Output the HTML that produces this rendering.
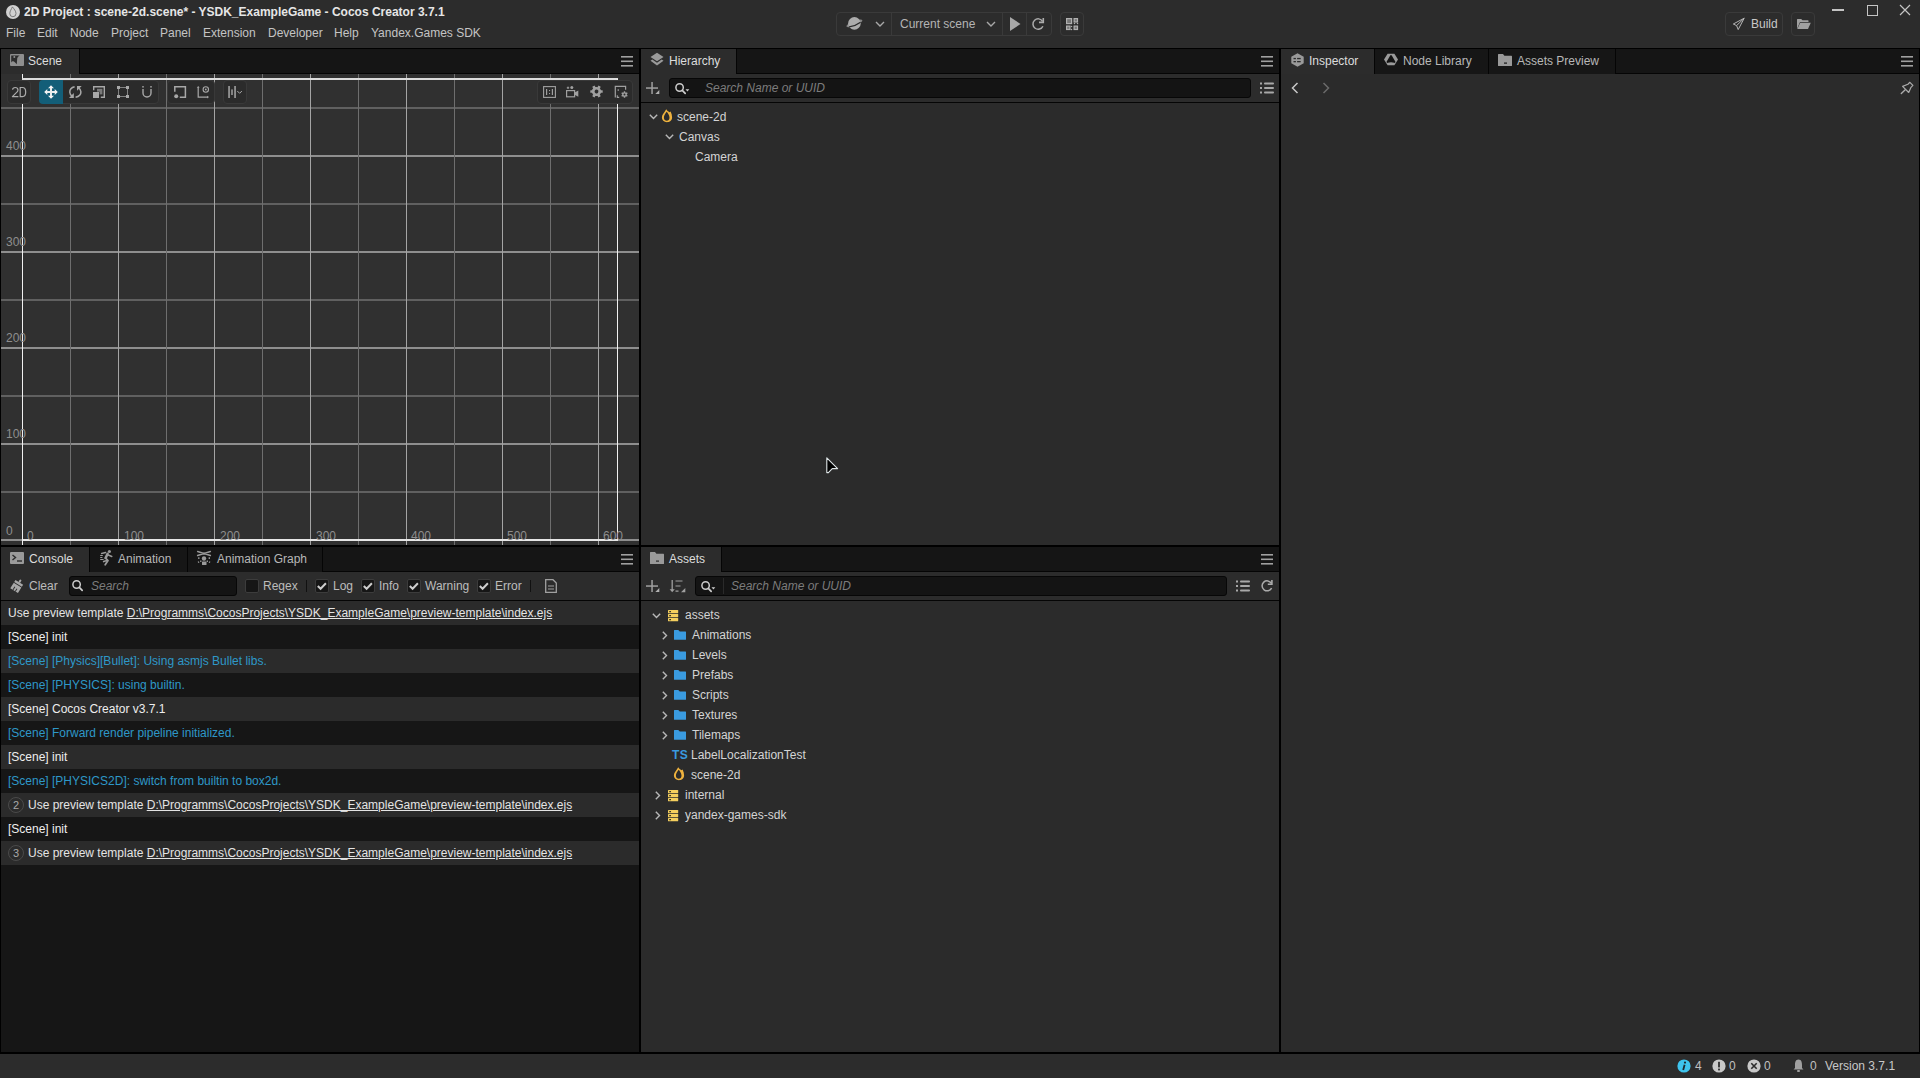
<!DOCTYPE html>
<html><head><meta charset="utf-8">
<style>
*{box-sizing:border-box;margin:0;padding:0}
html,body{width:1920px;height:1078px;overflow:hidden}
body{position:relative;background:#2c2c2c;font-family:"Liberation Sans",sans-serif;font-size:12px;color:#bdbdbd}
.a{position:absolute}
.t{position:absolute;white-space:pre;line-height:14px}
.blk{background:#000}
.tabbar{background:#141414}
.tab{position:absolute;top:0;height:24px;background:#2c2c2c;border-top:1px solid #383838}
.tab2{position:absolute;top:0;height:24px;background:#171717;border-right:1px solid #0b0b0b}
svg{position:absolute;overflow:visible}
</style></head><body>
<!-- TITLE BAR -->
<div class="a" style="left:0;top:0;width:1920px;height:48px;background:#2c2c2c"></div>
<svg style="left:6px;top:5px" width="14" height="14" viewBox="0 0 14 14"><circle cx="7" cy="7" r="7" fill="#d2d2d2"/><path d="M6.4 1.9 C8 4 10 6 10 8.6 A3.1 3.1 0 0 1 3.8 8.6 C3.8 6.2 5.3 4.4 6.4 1.9Z" fill="none" stroke="#707070" stroke-width="0.9"/></svg>
<div class="t" style="left:24px;top:5px;font-weight:bold;color:#e6e6e6">2D Project : scene-2d.scene* - YSDK_ExampleGame - Cocos Creator 3.7.1</div>
<div class="t" style="left:6px;top:26px;color:#c4c4c4">File</div>
<div class="t" style="left:37px;top:26px;color:#c4c4c4">Edit</div>
<div class="t" style="left:70px;top:26px;color:#c4c4c4">Node</div>
<div class="t" style="left:111px;top:26px;color:#c4c4c4">Project</div>
<div class="t" style="left:160px;top:26px;color:#c4c4c4">Panel</div>
<div class="t" style="left:203px;top:26px;color:#c4c4c4">Extension</div>
<div class="t" style="left:268px;top:26px;color:#c4c4c4">Developer</div>
<div class="t" style="left:334px;top:26px;color:#c4c4c4">Help</div>
<div class="t" style="left:371px;top:26px;color:#c4c4c4">Yandex.Games SDK</div>

<!-- HEADER TOOLBAR -->
<div class="a" style="left:836px;top:12px;width:216px;height:24px;border:1px solid #3a3a3a;border-radius:4px"></div>
<div class="a" style="left:891px;top:13px;width:1px;height:22px;background:#3a3a3a"></div>
<div class="a" style="left:1002px;top:13px;width:1px;height:22px;background:#3a3a3a"></div>
<div class="a" style="left:1026px;top:13px;width:1px;height:22px;background:#3a3a3a"></div>
<svg style="left:845px;top:15px" width="19" height="17" viewBox="0 0 19 17"><g transform="rotate(-22 9.4 8.4)"><ellipse cx="9.4" cy="8.4" rx="8.6" ry="2.4" fill="#858585"/></g><circle cx="9.4" cy="8.4" r="6.3" fill="#acacac"/><g transform="rotate(-22 9.4 8.4)"><path d="M3.2 9.6 Q9.4 11.2 15.6 9.6" fill="none" stroke="#2a2a2a" stroke-width="1.3"/></g></svg>
<svg style="left:875px;top:21px" width="10" height="7" viewBox="0 0 10 7"><path d="M1 1 L5 5 L9 1" fill="none" stroke="#a8a8a8" stroke-width="1.4"/></svg>
<div class="t" style="left:900px;top:17px;color:#b4b4b4">Current scene</div>
<svg style="left:986px;top:21px" width="10" height="7" viewBox="0 0 10 7"><path d="M1 1 L5 5 L9 1" fill="none" stroke="#a8a8a8" stroke-width="1.4"/></svg>
<svg style="left:1010px;top:17px" width="11" height="14" viewBox="0 0 11 14"><path d="M0 0 L10.5 7 L0 14Z" fill="#a8a8a8"/></svg>
<svg style="left:1032px;top:17px" width="13" height="14" viewBox="0 0 13 14"><path d="M10.6 4.3 A5.2 5.2 0 1 0 10.9 9.2" fill="none" stroke="#ababab" stroke-width="1.5"/><path d="M11.3 0.9 V5.4 H7" fill="none" stroke="#ababab" stroke-width="1.6"/></svg>
<div class="a" style="left:1060px;top:12px;width:24px;height:24px;border:1px solid #3a3a3a;border-radius:4px"></div>
<svg style="left:1066px;top:18px" width="12" height="12" viewBox="0 0 12 12"><rect x="0.6" y="0.6" width="5" height="5" fill="#777" stroke="#b0b0b0" stroke-width="1.2"/><rect x="8.1" y="0.6" width="3.4" height="3.4" fill="#777" stroke="#b0b0b0" stroke-width="1.2"/><rect x="0.6" y="8.1" width="3.4" height="3.4" fill="#777" stroke="#b0b0b0" stroke-width="1.2"/><rect x="8.1" y="8.1" width="3.4" height="3.4" fill="#777" stroke="#b0b0b0" stroke-width="1.2"/><circle cx="8.5" cy="5.5" r="0.75" fill="#b0b0b0"/><circle cx="11.5" cy="5.5" r="0.75" fill="#b0b0b0"/><circle cx="5.5" cy="8.5" r="0.75" fill="#b0b0b0"/><circle cx="5.5" cy="11.5" r="0.75" fill="#b0b0b0"/></svg>
<div class="a" style="left:1725px;top:12px;width:58px;height:24px;border:1px solid #3a3a3a;border-radius:4px"></div>
<svg style="left:1732px;top:17px" width="14" height="14" viewBox="0 0 14 14"><path d="M12.2 1.2 L1.3 7 L4.6 8.6 L6.2 12.6 Z M12.2 1.2 L4.6 8.6" fill="none" stroke="#b4b4b4" stroke-width="1" stroke-linejoin="round"/></svg>
<div class="t" style="left:1751px;top:17px;color:#c8c8c8">Build</div>
<div class="a" style="left:1791px;top:12px;width:24px;height:24px;border:1px solid #3a3a3a;border-radius:4px"></div>
<svg style="left:1797px;top:19px" width="14" height="10" viewBox="0 0 14 10"><path d="M0 0.5 Q0 0 0.5 0 H4.2 L5.5 1.3 H11 Q11.5 1.3 11.5 1.8 V3 H3 L0 10Z" fill="#a0a0a0"/><path d="M3.2 3.8 H13.8 L11 10 H0.3Z" fill="#a0a0a0"/></svg>
<div class="a" style="left:1832px;top:9px;width:12px;height:1.5px;background:#c4c4c4"></div>
<div class="a" style="left:1867px;top:5px;width:10.5px;height:10.5px;border:1.2px solid #c4c4c4"></div>
<svg style="left:1899px;top:4px" width="12" height="12" viewBox="0 0 12 12"><path d="M1 1 L11 11 M11 1 L1 11" stroke="#c4c4c4" stroke-width="1.2"/></svg>
<!-- FRAME (black) -->
<div class="a blk" style="left:0;top:48px;width:1920px;height:1006px"></div>

<!-- SCENE PANEL -->
<div class="a" style="left:1px;top:49px;width:638px;height:25px;background:#151515;border-bottom:1px solid #050505"></div>
<div class="a" style="left:1px;top:49px;width:79px;height:25px;background:#2c2c2c;border-right:1px solid #050505"></div>
<div class="a" style="left:1px;top:74px;width:638px;height:471px;background:#303030"></div>
<svg style="left:1px;top:74px" width="638" height="471"><rect x="0" y="33" width="638" height="2" fill="#606060"/><rect x="0" y="129" width="638" height="2" fill="#606060"/><rect x="0" y="225" width="638" height="2" fill="#606060"/><rect x="0" y="321" width="638" height="2" fill="#606060"/><rect x="0" y="417" width="638" height="2" fill="#606060"/><rect x="0" y="81" width="638" height="2" fill="#8e8e8e"/><rect x="0" y="177" width="638" height="2" fill="#8e8e8e"/><rect x="0" y="273" width="638" height="2" fill="#8e8e8e"/><rect x="0" y="369" width="638" height="2" fill="#8e8e8e"/><rect x="69" y="0" width="1" height="471" fill="#6e6e6e"/><rect x="165" y="0" width="1" height="471" fill="#6e6e6e"/><rect x="261" y="0" width="1" height="471" fill="#6e6e6e"/><rect x="357" y="0" width="1" height="471" fill="#6e6e6e"/><rect x="453" y="0" width="1" height="471" fill="#6e6e6e"/><rect x="549" y="0" width="1" height="471" fill="#6e6e6e"/><rect x="117" y="0" width="1" height="471" fill="#a4a4a4"/><rect x="213" y="0" width="1" height="471" fill="#a4a4a4"/><rect x="309" y="0" width="1" height="471" fill="#a4a4a4"/><rect x="405" y="0" width="1" height="471" fill="#a4a4a4"/><rect x="501" y="0" width="1" height="471" fill="#a4a4a4"/><rect x="597" y="0" width="1" height="471" fill="#a4a4a4"/><rect x="0" y="465" width="638" height="2" fill="#8e8e8e"/><rect x="21" y="465" width="596" height="2" fill="#e6e6e6"/><rect x="21" y="0" width="1" height="471" fill="#f0f0f0"/><rect x="21" y="4" width="596" height="2" fill="#dcdcdc"/><rect x="616" y="5" width="1" height="461" fill="#f0f0f0"/></svg>
<svg style="left:10px;top:54px" width="14" height="12" viewBox="0 0 14 12"><rect x="0" y="0" width="14" height="12" rx="1" fill="#8e8e8e"/><path d="M1.2 1.4 H9.8 C8.4 1.9 7.6 2.9 7.2 4.4 L6.8 10.2 L4.6 7.9 C3.8 7 2.8 7 2 7.6 L1.2 8.4 Z" fill="#2c2c2c"/><circle cx="4.3" cy="3.1" r="1" fill="#8e8e8e"/></svg>
<div class="t" style="left:28px;top:54px;color:#dcdcdc">Scene</div>
<svg style="left:621px;top:56px" width="12" height="11" viewBox="0 0 12 11"><rect y="0" width="12" height="1.6" fill="#a0a0a0"/><rect y="4.5" width="12" height="1.6" fill="#a0a0a0"/><rect y="9" width="12" height="1.6" fill="#a0a0a0"/></svg>
<!-- toolbar -->
<div class="a" style="left:7px;top:80px;width:24px;height:24px;border:1px solid #393939;border-radius:4px;background:#2b2b2b"></div>
<svg style="left:11px;top:86px" width="17" height="12" viewBox="0 0 17 12"><path d="M1.5 3.7 C1.7 2.2 2.9 1.5 4.3 1.5 C5.9 1.5 7 2.5 7 3.9 C7 5.1 6.2 5.9 5.1 6.9 L1.4 10.6 H7.4" fill="none" stroke="#acacac" stroke-width="1.2" stroke-linejoin="round"/><path d="M9.2 1.5 V10.6 H11.4 C13.6 10.6 14.7 8.7 14.7 6 C14.7 3.3 13.6 1.5 11.4 1.5 Z" fill="none" stroke="#acacac" stroke-width="1.2"/></svg>
<div class="a" style="left:39px;top:80px;width:120px;height:24px;border:1px solid #393939;border-radius:4px;background:#2b2b2b"></div>
<div class="a" style="left:39px;top:80px;width:24px;height:24px;border-radius:4px 0 0 4px;background:#135e78"></div>
<div class="a" style="left:167px;top:80px;width:48px;height:24px;border:1px solid #393939;border-radius:4px;background:#2b2b2b"></div>
<div class="a" style="left:223px;top:80px;width:24px;height:24px;border:1px solid #393939;border-radius:4px;background:#2b2b2b"></div>
<div class="a" style="left:537px;top:80px;width:96px;height:24px;border:1px solid #393939;border-radius:4px;background:#2b2b2b"></div>
<!-- move icon -->
<svg style="left:44px;top:85px" width="14" height="14" viewBox="0 0 14 14"><path d="M7 0.2 L10 3.3 H4Z M7 13.8 L10 10.7 H4Z M0.2 7 L3.3 4 V10Z M13.8 7 L10.7 4 V10Z" fill="#f4f4f4"/><rect x="6" y="3" width="2" height="8" fill="#e8ecec"/><rect x="3" y="6" width="8" height="2" fill="#e8ecec"/></svg>
<!-- rotate icon -->
<svg style="left:69px;top:86px" width="13" height="12" viewBox="0 0 13 12"><path d="M5.6 0.7 C2.5 1.4 0.7 3.6 0.8 6.2 C0.9 8 1.8 9.4 3.2 10.3" fill="none" stroke="#a8a8a8" stroke-width="1.5"/><path d="M4.8 7 V12 H0Z" fill="#a8a8a8"/><path d="M6.6 11.3 C10 10.6 12 8.4 11.9 5.8 C11.8 4 11 2.8 9.6 1.8" fill="none" stroke="#a8a8a8" stroke-width="1.5"/><path d="M8 0 H12.7 L8 4.8Z" fill="#a8a8a8"/></svg>
<!-- scale icon -->
<svg style="left:93px;top:86px" width="12" height="12" viewBox="0 0 12 12"><path d="M0.7 4.3 V0.7 H11.3 V11.3 H7.8" fill="none" stroke="#a8a8a8" stroke-width="1.4"/><rect x="4" y="2.8" width="5.4" height="5.6" fill="#7a7a7a"/><rect x="-0.4" y="5.6" width="7" height="7" fill="#2b2b2b"/><rect x="0" y="6" width="6" height="6" fill="#a8a8a8"/></svg>
<!-- rect icon -->
<svg style="left:117px;top:86px" width="12" height="12" viewBox="0 0 12 12"><rect x="1.5" y="1.5" width="9" height="9" fill="none" stroke="#8c8c8c" stroke-width="0.9"/><rect x="0" y="0" width="3" height="3" fill="#a8a8a8"/><rect x="9" y="0" width="3" height="3" fill="#a8a8a8"/><rect x="0" y="9" width="3" height="3" fill="#a8a8a8"/><rect x="9" y="9" width="3" height="3" fill="#a8a8a8"/></svg>
<!-- snap icon U -->
<svg style="left:142px;top:86px" width="10" height="12" viewBox="0 0 10 12"><path d="M1 3 V7 A4 4 0 0 0 9 7 V3" fill="none" stroke="#a8a8a8" stroke-width="1.4"/><rect x="0.3" y="0" width="1.4" height="1.6" fill="#a8a8a8"/><rect x="8.3" y="0" width="1.4" height="1.6" fill="#a8a8a8"/></svg>
<!-- group2 icons -->
<svg style="left:174px;top:86px" width="13" height="13" viewBox="0 0 13 13"><path d="M0.8 5.8 V0.8 H11.4 V11.3 H5.8" fill="none" stroke="#a8a8a8" stroke-width="1.5"/><circle cx="2.2" cy="10.2" r="2" fill="#a8a8a8"/></svg>
<svg style="left:197px;top:86px" width="13" height="13" viewBox="0 0 13 13"><path d="M1.2 1.2 V11.1 H11" fill="none" stroke="#a8a8a8" stroke-width="1.2"/><path d="M1.2 0 L2.6 1.8 H-0.2Z M12 11.1 L10.2 9.7 V12.5Z" fill="#a8a8a8"/><circle cx="8.8" cy="3.5" r="2.7" fill="none" stroke="#a8a8a8" stroke-width="1.1"/><circle cx="8.8" cy="3.5" r="0.9" fill="#a8a8a8"/></svg>
<!-- group3 icon -->
<svg style="left:227px;top:86px" width="16" height="12" viewBox="0 0 16 12"><rect x="1.3" y="0" width="1.5" height="12" fill="#a8a8a8"/><rect x="4.3" y="3.4" width="1.4" height="5.6" fill="#a8a8a8"/><rect x="7.3" y="0" width="1.5" height="12" fill="#a8a8a8"/><path d="M10.3 5 L12.6 7.3 L14.9 5" fill="none" stroke="#a8a8a8" stroke-width="1"/></svg>
<!-- right group icons -->
<svg style="left:543px;top:86px" width="13" height="12" viewBox="0 0 13 12"><rect x="0.6" y="0.6" width="11.8" height="10.8" fill="none" stroke="#a0a0a0" stroke-width="1.1"/><rect x="3" y="3" width="1.2" height="6" fill="#a0a0a0"/><rect x="8.8" y="3" width="1.2" height="6" fill="#a0a0a0"/><rect x="6" y="4" width="1.1" height="1.1" fill="#a0a0a0"/><rect x="6" y="7" width="1.1" height="1.1" fill="#a0a0a0"/></svg>
<svg style="left:566px;top:85px" width="13" height="13" viewBox="0 0 13 13"><rect x="0.6" y="5.6" width="8" height="6.2" fill="none" stroke="#a0a0a0" stroke-width="1.2"/><path d="M8.6 7.6 L12.3 5.6 V11.8 L8.6 9.8Z" fill="#a0a0a0"/><circle cx="5.8" cy="2.4" r="1.5" fill="#a0a0a0"/><path d="M0.8 2.8 H3.2 M2 1.6 V4" stroke="#a0a0a0" stroke-width="1"/></svg>
<svg style="left:590px;top:85px" width="13" height="13" viewBox="0 0 13 13"><g transform="rotate(30 6.5 6.5)"><circle cx="6.5" cy="6.5" r="4.6" fill="#a0a0a0"/><rect x="5.2" y="0.30000000000000027" width="2.6" height="2.6" rx="0.4" fill="#a0a0a0" transform="rotate(0.0 6.5 6.5)"/><rect x="5.2" y="0.30000000000000027" width="2.6" height="2.6" rx="0.4" fill="#a0a0a0" transform="rotate(60.0 6.5 6.5)"/><rect x="5.2" y="0.30000000000000027" width="2.6" height="2.6" rx="0.4" fill="#a0a0a0" transform="rotate(120.0 6.5 6.5)"/><rect x="5.2" y="0.30000000000000027" width="2.6" height="2.6" rx="0.4" fill="#a0a0a0" transform="rotate(180.0 6.5 6.5)"/><rect x="5.2" y="0.30000000000000027" width="2.6" height="2.6" rx="0.4" fill="#a0a0a0" transform="rotate(240.0 6.5 6.5)"/><rect x="5.2" y="0.30000000000000027" width="2.6" height="2.6" rx="0.4" fill="#a0a0a0" transform="rotate(300.0 6.5 6.5)"/><circle cx="6.5" cy="6.5" r="1.9" fill="#2b2b2b"/></g></svg>
<svg style="left:614px;top:85px" width="14" height="14" viewBox="0 0 14 14"><path d="M1.3 12.5 V1.3 H11.6 V4.8" fill="none" stroke="#a0a0a0" stroke-width="1.2"/><rect x="3.6" y="4.3" width="1.3" height="1.5" fill="#a0a0a0"/><path d="M3.3 10.2 V12.4 H5.2" fill="none" stroke="#a0a0a0" stroke-width="1.1"/><g transform="translate(1.5 0)"><circle cx="9" cy="9.5" r="2.3" fill="#a0a0a0"/><rect x="8.25" y="6.2" width="1.5" height="2.0" rx="0.4" fill="#a0a0a0" transform="rotate(0.0 9 9.5)"/><rect x="8.25" y="6.2" width="1.5" height="2.0" rx="0.4" fill="#a0a0a0" transform="rotate(60.0 9 9.5)"/><rect x="8.25" y="6.2" width="1.5" height="2.0" rx="0.4" fill="#a0a0a0" transform="rotate(120.0 9 9.5)"/><rect x="8.25" y="6.2" width="1.5" height="2.0" rx="0.4" fill="#a0a0a0" transform="rotate(180.0 9 9.5)"/><rect x="8.25" y="6.2" width="1.5" height="2.0" rx="0.4" fill="#a0a0a0" transform="rotate(240.0 9 9.5)"/><rect x="8.25" y="6.2" width="1.5" height="2.0" rx="0.4" fill="#a0a0a0" transform="rotate(300.0 9 9.5)"/><circle cx="9" cy="9.5" r="1.0" fill="#2b2b2b"/></g></svg>
<!-- labels -->
<div class="t" style="left:6px;top:139px;color:#8e8e8e;font-size:12px">400</div>
<div class="t" style="left:6px;top:235px;color:#8e8e8e;font-size:12px">300</div>
<div class="t" style="left:6px;top:331px;color:#8e8e8e;font-size:12px">200</div>
<div class="t" style="left:6px;top:427px;color:#8e8e8e;font-size:12px">100</div>
<div class="t" style="left:6px;top:524px;color:#8e8e8e;font-size:12px">0</div>
<div class="t" style="left:27px;top:529px;color:#8e8e8e;font-size:12px">0</div>
<div class="t" style="left:124px;top:529px;color:#8e8e8e;font-size:12px">100</div>
<div class="t" style="left:220px;top:529px;color:#8e8e8e;font-size:12px">200</div>
<div class="t" style="left:316px;top:529px;color:#8e8e8e;font-size:12px">300</div>
<div class="t" style="left:411px;top:529px;color:#8e8e8e;font-size:12px">400</div>
<div class="t" style="left:507px;top:529px;color:#8e8e8e;font-size:12px">500</div>
<div class="t" style="left:603px;top:529px;color:#8e8e8e;font-size:12px">600</div>
<!-- HIERARCHY PANEL -->
<div class="a" style="left:641px;top:49px;width:638px;height:25px;background:#151515;border-bottom:1px solid #050505"></div>
<div class="a" style="left:641px;top:49px;width:96px;height:25px;background:#2c2c2c;border-right:1px solid #050505"></div>
<div class="a" style="left:641px;top:74px;width:638px;height:28px;background:#2c2c2c"></div>
<div class="a" style="left:641px;top:102px;width:638px;height:1px;background:#050505"></div>
<div class="a" style="left:641px;top:103px;width:638px;height:442px;background:#2b2b2b"></div>
<svg style="left:650px;top:52px" width="14" height="15" viewBox="0 0 14 15"><path d="M7 0.8 L13.5 5 L7 9.2 L0.5 5Z" fill="#9a9a9a"/><path d="M2.3 7.4 L0.5 8.8 L7 13.6 L13.5 8.8 L11.7 7.4 L7 10.8Z" fill="#9a9a9a"/></svg>
<div class="t" style="left:669px;top:54px;color:#dcdcdc;">Hierarchy</div>
<svg style="left:1261px;top:56px" width="12" height="11" viewBox="0 0 12 11"><rect y="0" width="12" height="1.6" fill="#a0a0a0"/><rect y="4.5" width="12" height="1.6" fill="#a0a0a0"/><rect y="9" width="12" height="1.6" fill="#a0a0a0"/></svg>
<svg style="left:646px;top:82px" width="14" height="14" viewBox="0 0 14 14"><rect x="5.3" y="0" width="1.5" height="12" fill="#a0a0a0"/><rect x="0" y="5.3" width="12" height="1.5" fill="#a0a0a0"/><path d="M13.3 8.1 V12.1 H9.3Z" fill="#b0b0b0"/></svg>
<div class="a" style="left:669px;top:78px;width:582px;height:20px;background:#141414;border:1px solid #070707;border-radius:3px"></div>
<svg style="left:675px;top:83px" width="16" height="12" viewBox="0 0 16 12"><circle cx="4.6" cy="4.5" r="3.7" fill="none" stroke="#cccccc" stroke-width="1.5"/><path d="M7.3 7.3 L10.2 10.4" stroke="#cccccc" stroke-width="1.7" stroke-linecap="round"/><path d="M10.5 6.3 H14.3 L12.4 8.6Z" fill="#cccccc"/></svg>
<div class="t" style="left:705px;top:81px;color:#7c7c7c;font-style:italic">Search Name or UUID</div>
<svg style="left:1260px;top:82px" width="14" height="12" viewBox="0 0 14 12"><rect x="0" y="0.5" width="2" height="2" fill="#a8a8a8"/><rect x="0" y="5" width="2" height="2" fill="#a8a8a8"/><rect x="0" y="9.5" width="2" height="2" fill="#a8a8a8"/><rect x="4" y="0.6" width="10" height="1.8" rx="0.9" fill="#a8a8a8"/><rect x="4" y="5.1" width="10" height="1.8" rx="0.9" fill="#a8a8a8"/><rect x="4" y="9.6" width="10" height="1.8" rx="0.9" fill="#a8a8a8"/></svg>
<svg style="left:649px;top:114px" width="9" height="6" viewBox="0 0 9 6"><path d="M0.8 0.8 L4.5 4.5 L8.2 0.8" fill="none" stroke="#b8b8b8" stroke-width="1.4"/></svg>
<svg style="left:661px;top:109px" width="12" height="14" viewBox="0 0 12 14"><path fill-rule="evenodd" d="M5.2 0.3 C6 1.5 7 2.5 8.5 3.3 L9.6 2.6 C10.6 4.5 11.1 6.5 11.1 8.5 C11.1 11.5 8.6 13.2 6 13.2 C3 13.2 0.9 11 0.9 8.3 C0.9 5.5 3.5 3.5 5.2 0.3Z M5.7 2.8 C7.1 4.4 8.5 6.3 8.5 8.8 C8.5 10.6 7.3 11.7 5.8 11.7 C4.2 11.7 2.9 10.6 2.9 8.8 C2.9 6.3 4.4 4.5 5.7 2.8Z" fill="#eeb23e"/></svg>
<div class="t" style="left:677px;top:110px;color:#d4d4d4;">scene-2d</div>
<svg style="left:665px;top:134px" width="9" height="6" viewBox="0 0 9 6"><path d="M0.8 0.8 L4.5 4.5 L8.2 0.8" fill="none" stroke="#b8b8b8" stroke-width="1.4"/></svg>
<div class="t" style="left:679px;top:130px;color:#d4d4d4;">Canvas</div>
<div class="t" style="left:695px;top:150px;color:#d4d4d4;">Camera</div>
<!-- INSPECTOR PANEL -->
<div class="a" style="left:1281px;top:49px;width:638px;height:25px;background:#151515;border-bottom:1px solid #050505"></div>
<div class="a" style="left:1281px;top:49px;width:94px;height:25px;background:#2c2c2c;border-right:1px solid #050505"></div>
<div class="a" style="left:1375px;top:49px;width:114px;height:25px;background:#161616;border-right:1px solid #050505"></div>
<div class="a" style="left:1489px;top:49px;width:127px;height:25px;background:#161616;border-right:1px solid #050505"></div>
<div class="a" style="left:1281px;top:74px;width:638px;height:978px;background:#2b2b2b"></div>
<svg style="left:1291px;top:53px" width="13" height="14" viewBox="0 0 13 14"><path d="M6.5 0.3 L12.7 3.7 V10.3 L6.5 13.7 L0.3 10.3 V3.7Z" fill="#9a9a9a"/><rect x="2.5" y="4.9" width="2.4" height="1.3" fill="#2c2c2c"/><rect x="2.5" y="8" width="2.4" height="1.3" fill="#2c2c2c"/><rect x="6.1" y="4.9" width="3.6" height="1.3" fill="#2c2c2c"/><rect x="6.1" y="8" width="3.6" height="1.3" fill="#2c2c2c"/></svg>
<div class="t" style="left:1309px;top:54px;color:#dcdcdc;">Inspector</div>
<svg style="left:1384px;top:53px" width="14" height="13" viewBox="0 0 14 13"><path d="M3.6 0.7 H10.4 L14 6.5 L10.4 12.3 H3.6 L0 6.5Z" fill="#9a9a9a"/><path d="M7 3 L10.5 9 Q7 7.6 3.5 9Z" fill="#131313" stroke="#131313" stroke-width="1.8" stroke-linejoin="round"/></svg>
<div class="t" style="left:1403px;top:54px;color:#b8b8b8;">Node Library</div>
<svg style="left:1498px;top:54px" width="14" height="12" viewBox="0 0 14 12"><path d="M0 0.6 Q0 0 0.6 0 H5 L6.4 1.8 H13.4 Q14 1.8 14 2.4 V11.4 Q14 12 13.4 12 H0.6 Q0 12 0 11.4Z" fill="#9a9a9a"/><rect x="6" y="8.5" width="3" height="1.2" fill="#181818"/></svg>
<div class="t" style="left:1517px;top:54px;color:#b8b8b8;">Assets Preview</div>
<svg style="left:1901px;top:56px" width="12" height="11" viewBox="0 0 12 11"><rect y="0" width="12" height="1.6" fill="#a0a0a0"/><rect y="4.5" width="12" height="1.6" fill="#a0a0a0"/><rect y="9" width="12" height="1.6" fill="#a0a0a0"/></svg>
<svg style="left:1291px;top:82px" width="8" height="12" viewBox="0 0 8 12"><path d="M6.5 1 L1.5 6 L6.5 11" fill="none" stroke="#c8c8c8" stroke-width="1.5"/></svg>
<svg style="left:1322px;top:82px" width="8" height="12" viewBox="0 0 8 12"><path d="M1.5 1 L6.5 6 L1.5 11" fill="none" stroke="#6a6a6a" stroke-width="1.5"/></svg>
<svg style="left:1900px;top:81px" width="14" height="14" viewBox="0 0 14 14"><path d="M9.9 1.3 L12.9 4.4 L11 6.3 L8.7 11.5 L2.6 5.4 L7.9 3.2 Z" fill="none" stroke="#ababab" stroke-width="1.2" stroke-linejoin="round"/><path d="M5 9 L1.3 12.6" stroke="#ababab" stroke-width="1.4" stroke-linecap="round"/></svg>
<!-- CONSOLE PANEL -->
<div class="a" style="left:1px;top:547px;width:638px;height:25px;background:#151515;border-bottom:1px solid #050505"></div>
<div class="a" style="left:1px;top:547px;width:89px;height:25px;background:#2c2c2c;border-right:1px solid #050505"></div>
<div class="a" style="left:90px;top:547px;width:98px;height:25px;background:#161616;border-right:1px solid #050505"></div>
<div class="a" style="left:188px;top:547px;width:135px;height:25px;background:#161616;border-right:1px solid #050505"></div>
<div class="a" style="left:1px;top:572px;width:638px;height:28px;background:#2c2c2c"></div>
<div class="a" style="left:1px;top:600px;width:638px;height:1px;background:#050505"></div>
<div class="a" style="left:1px;top:601px;width:638px;height:451px;background:#161616"></div>
<svg style="left:10px;top:552px" width="14" height="12" viewBox="0 0 14 12"><rect width="14" height="12" rx="1" fill="#9a9a9a"/><path d="M2.5 3 L5.5 5.5 L2.5 8" fill="none" stroke="#2c2c2c" stroke-width="1.4"/><rect x="7" y="8.3" width="5" height="1.4" fill="#2c2c2c"/></svg>
<div class="t" style="left:29px;top:552px;color:#dcdcdc;">Console</div>
<svg style="left:99px;top:549px" width="14" height="17" viewBox="0 0 14 17"><circle cx="10.4" cy="2.5" r="1.6" fill="#9a9a9a"/><g fill="none" stroke="#9a9a9a" stroke-linecap="round"><path d="M2.6 4.4 L6.6 3.6" stroke-width="1.5"/><path d="M8.6 4.8 L6.6 9" stroke-width="2.6"/><path d="M9.3 6 L12.8 7.5" stroke-width="1.5"/><path d="M6.6 9 L9 11.5 L6.2 15.8" stroke-width="1.8" stroke-linejoin="round"/><path d="M8 11.5 L4.6 12.6" stroke-width="1.6"/><path d="M1.2 6.5 H3.8 M1.2 8.5 H3.4 M1.2 10.5 H4.6" stroke-width="1.2" stroke-linecap="butt"/></g></svg>
<div class="t" style="left:118px;top:552px;color:#b8b8b8;">Animation</div>
<svg style="left:197px;top:550px" width="14" height="16" viewBox="0 0 14 16"><path d="M0.6 1.5 L13.4 5.5 M0.6 5.5 L13.4 1.5" stroke="#9a9a9a" stroke-width="1.4" stroke-linecap="round"/><circle cx="7" cy="8.5" r="2.2" fill="#9a9a9a"/><rect x="5" y="11.4" width="4.5" height="3.6" rx="0.5" fill="#9a9a9a"/><path d="M1.8 7.2 V9 M1.2 11.5 L1.9 12.8 M3.8 10.6 V12 M12.3 7.2 V9 M12.9 11.5 L12.2 12.8 M10.3 10.6 V12" stroke="#9a9a9a" stroke-width="1.3"/></svg>
<div class="t" style="left:217px;top:552px;color:#b8b8b8;">Animation Graph</div>
<svg style="left:621px;top:554px" width="12" height="11" viewBox="0 0 12 11"><rect y="0" width="12" height="1.6" fill="#a0a0a0"/><rect y="4.5" width="12" height="1.6" fill="#a0a0a0"/><rect y="9" width="12" height="1.6" fill="#a0a0a0"/></svg>
<svg style="left:9px;top:578px" width="16" height="16" viewBox="0 0 16 16"><g transform="rotate(32 8 8)"><rect x="7" y="0.6" width="2" height="3.4" rx="1" fill="#a8a8a8"/><rect x="3.5" y="3.6" width="9" height="2.5" fill="#a8a8a8"/><rect x="3.5" y="6.9" width="9" height="6.6" fill="#a8a8a8"/><rect x="6.2" y="9.8" width="0.9" height="3.8" fill="#2c2c2c"/><rect x="9" y="10.4" width="0.9" height="3.2" fill="#2c2c2c"/></g></svg>
<div class="t" style="left:29px;top:579px;color:#bcbcbc;">Clear</div>
<div class="a" style="left:69px;top:576px;width:168px;height:20px;background:#141414;border:1px solid #070707;border-radius:3px"></div>
<svg style="left:72px;top:580px" width="16" height="12" viewBox="0 0 16 12"><circle cx="4.6" cy="4.5" r="3.7" fill="none" stroke="#cccccc" stroke-width="1.5"/><path d="M7.3 7.3 L10.2 10.4" stroke="#cccccc" stroke-width="1.7" stroke-linecap="round"/></svg>
<div class="t" style="left:91px;top:579px;color:#7c7c7c;font-style:italic">Search</div>
<div class="a" style="left:245px;top:579px;width:14px;height:14px;background:#161616;border:1px solid #3c3c3c;border-radius:2px"></div>
<div class="t" style="left:263px;top:579px;color:#bcbcbc;">Regex</div>
<div class="a" style="left:306px;top:580px;width:1px;height:12px;background:#111"></div>
<div class="a" style="left:315px;top:579px;width:14px;height:14px;background:#161616;border:1px solid #3c3c3c;border-radius:2px"></div><svg style="left:317px;top:582px" width="10" height="8" viewBox="0 0 10 8"><path d="M0.8 4 L3.6 6.8 L8.9 1.3" fill="none" stroke="#cdcdcd" stroke-width="2"/></svg>
<div class="t" style="left:333px;top:579px;color:#bcbcbc;">Log</div>
<div class="a" style="left:361px;top:579px;width:14px;height:14px;background:#161616;border:1px solid #3c3c3c;border-radius:2px"></div><svg style="left:363px;top:582px" width="10" height="8" viewBox="0 0 10 8"><path d="M0.8 4 L3.6 6.8 L8.9 1.3" fill="none" stroke="#cdcdcd" stroke-width="2"/></svg>
<div class="t" style="left:379px;top:579px;color:#bcbcbc;">Info</div>
<div class="a" style="left:407px;top:579px;width:14px;height:14px;background:#161616;border:1px solid #3c3c3c;border-radius:2px"></div><svg style="left:409px;top:582px" width="10" height="8" viewBox="0 0 10 8"><path d="M0.8 4 L3.6 6.8 L8.9 1.3" fill="none" stroke="#cdcdcd" stroke-width="2"/></svg>
<div class="t" style="left:425px;top:579px;color:#bcbcbc;">Warning</div>
<div class="a" style="left:477px;top:579px;width:14px;height:14px;background:#161616;border:1px solid #3c3c3c;border-radius:2px"></div><svg style="left:479px;top:582px" width="10" height="8" viewBox="0 0 10 8"><path d="M0.8 4 L3.6 6.8 L8.9 1.3" fill="none" stroke="#cdcdcd" stroke-width="2"/></svg>
<div class="t" style="left:495px;top:579px;color:#bcbcbc;">Error</div>
<div class="a" style="left:530px;top:580px;width:1px;height:12px;background:#111"></div>
<svg style="left:545px;top:579px" width="12" height="14" viewBox="0 0 12 14"><path d="M0.7 0.7 H8 L11.3 4 V13.3 H0.7Z" fill="none" stroke="#a0a0a0" stroke-width="1.3"/><path d="M3 7 H9 M3 10 H9" stroke="#a0a0a0" stroke-width="1.2"/></svg>
<div class="a" style="left:1px;top:601px;width:638px;height:24px;background:#2b2b2b"></div>
<div class="t" style="left:8px;top:606px;color:#e4e4e4;">Use preview template <u>D:\Programms\CocosProjects\YSDK_ExampleGame\preview-template\index.ejs</u></div>
<div class="a" style="left:1px;top:625px;width:638px;height:24px;background:#161616"></div>
<div class="t" style="left:8px;top:630px;color:#eeeeee;">[Scene] init</div>
<div class="a" style="left:1px;top:649px;width:638px;height:24px;background:#2b2b2b"></div>
<div class="t" style="left:8px;top:654px;color:#2e98c8;">[Scene] [Physics][Bullet]: Using asmjs Bullet libs.</div>
<div class="a" style="left:1px;top:673px;width:638px;height:24px;background:#161616"></div>
<div class="t" style="left:8px;top:678px;color:#2e98c8;">[Scene] [PHYSICS]: using builtin.</div>
<div class="a" style="left:1px;top:697px;width:638px;height:24px;background:#2b2b2b"></div>
<div class="t" style="left:8px;top:702px;color:#eeeeee;">[Scene] Cocos Creator v3.7.1</div>
<div class="a" style="left:1px;top:721px;width:638px;height:24px;background:#161616"></div>
<div class="t" style="left:8px;top:726px;color:#2e98c8;">[Scene] Forward render pipeline initialized.</div>
<div class="a" style="left:1px;top:745px;width:638px;height:24px;background:#2b2b2b"></div>
<div class="t" style="left:8px;top:750px;color:#eeeeee;">[Scene] init</div>
<div class="a" style="left:1px;top:769px;width:638px;height:24px;background:#161616"></div>
<div class="t" style="left:8px;top:774px;color:#2e98c8;">[Scene] [PHYSICS2D]: switch from builtin to box2d.</div>
<div class="a" style="left:1px;top:793px;width:638px;height:24px;background:#2b2b2b"></div>
<div class="a" style="left:8px;top:797px;width:16px;height:16px;border:1px solid #4a4a4a;border-radius:8px"></div>
<div class="t" style="left:13px;top:798px;color:#a8a8a8;font-size:11px">2</div>
<div class="t" style="left:28px;top:798px;color:#e4e4e4;">Use preview template <u>D:\Programms\CocosProjects\YSDK_ExampleGame\preview-template\index.ejs</u></div>
<div class="a" style="left:1px;top:817px;width:638px;height:24px;background:#161616"></div>
<div class="t" style="left:8px;top:822px;color:#eeeeee;">[Scene] init</div>
<div class="a" style="left:1px;top:841px;width:638px;height:24px;background:#2b2b2b"></div>
<div class="a" style="left:8px;top:845px;width:16px;height:16px;border:1px solid #4a4a4a;border-radius:8px"></div>
<div class="t" style="left:13px;top:846px;color:#a8a8a8;font-size:11px">3</div>
<div class="t" style="left:28px;top:846px;color:#e4e4e4;">Use preview template <u>D:\Programms\CocosProjects\YSDK_ExampleGame\preview-template\index.ejs</u></div>
<!-- ASSETS PANEL -->
<div class="a" style="left:641px;top:547px;width:638px;height:25px;background:#151515;border-bottom:1px solid #050505"></div>
<div class="a" style="left:641px;top:547px;width:81px;height:25px;background:#2c2c2c;border-right:1px solid #050505"></div>
<div class="a" style="left:641px;top:572px;width:638px;height:28px;background:#2c2c2c"></div>
<div class="a" style="left:641px;top:600px;width:638px;height:1px;background:#050505"></div>
<div class="a" style="left:641px;top:601px;width:638px;height:451px;background:#2b2b2b"></div>
<svg style="left:650px;top:552px" width="14" height="12" viewBox="0 0 14 12"><path d="M0 0.6 Q0 0 0.6 0 H5 L6.4 1.8 H13.4 Q14 1.8 14 2.4 V11.4 Q14 12 13.4 12 H0.6 Q0 12 0 11.4Z" fill="#9a9a9a"/><rect x="6" y="8.5" width="3" height="1.2" fill="#2c2c2c"/></svg>
<div class="t" style="left:669px;top:552px;color:#dcdcdc;">Assets</div>
<svg style="left:1261px;top:554px" width="12" height="11" viewBox="0 0 12 11"><rect y="0" width="12" height="1.6" fill="#a0a0a0"/><rect y="4.5" width="12" height="1.6" fill="#a0a0a0"/><rect y="9" width="12" height="1.6" fill="#a0a0a0"/></svg>
<svg style="left:646px;top:580px" width="14" height="14" viewBox="0 0 14 14"><rect x="5.3" y="0" width="1.5" height="12" fill="#a0a0a0"/><rect x="0" y="5.3" width="12" height="1.5" fill="#a0a0a0"/><path d="M13.3 8.1 V12.1 H9.3Z" fill="#b0b0b0"/></svg>
<svg style="left:669px;top:580px" width="17" height="13" viewBox="0 0 17 13"><path d="M3.2 0 V10.5" stroke="#a0a0a0" stroke-width="1.3"/><path d="M0.6 9.2 L3.2 12.3 L5.8 9.2Z" fill="#a0a0a0"/><path d="M6.5 1 H13.5 M6.5 6 H11.5 M6.5 11.2 H9.5" stroke="#a0a0a0" stroke-width="1.2"/><path d="M16.3 8 V12.3 H12Z" fill="#a0a0a0"/></svg>
<div class="a" style="left:695px;top:576px;width:532px;height:20px;background:#141414;border:1px solid #070707;border-radius:3px"></div>
<div class="a" style="left:723px;top:578px;width:1px;height:16px;background:#2a2a2a"></div>
<svg style="left:701px;top:581px" width="16" height="12" viewBox="0 0 16 12"><circle cx="4.6" cy="4.5" r="3.7" fill="none" stroke="#cccccc" stroke-width="1.5"/><path d="M7.3 7.3 L10.2 10.4" stroke="#cccccc" stroke-width="1.7" stroke-linecap="round"/><path d="M10.5 6.3 H14.3 L12.4 8.6Z" fill="#cccccc"/></svg>
<div class="t" style="left:731px;top:579px;color:#7c7c7c;font-style:italic">Search Name or UUID</div>
<svg style="left:1236px;top:580px" width="14" height="12" viewBox="0 0 14 12"><rect x="0" y="0.5" width="2" height="2" fill="#a8a8a8"/><rect x="0" y="5" width="2" height="2" fill="#a8a8a8"/><rect x="0" y="9.5" width="2" height="2" fill="#a8a8a8"/><rect x="4" y="0.6" width="10" height="1.8" rx="0.9" fill="#a8a8a8"/><rect x="4" y="5.1" width="10" height="1.8" rx="0.9" fill="#a8a8a8"/><rect x="4" y="9.6" width="10" height="1.8" rx="0.9" fill="#a8a8a8"/></svg>
<svg style="left:1261px;top:579px" width="13" height="14" viewBox="0 0 13 14"><path d="M10.4 4.3 A5 5 0 1 0 10.6 9" fill="none" stroke="#ababab" stroke-width="1.5"/><path d="M10.9 0.9 V5.3 H6.8" fill="none" stroke="#ababab" stroke-width="1.6" stroke-linejoin="miter"/></svg>
<svg style="left:652px;top:613px" width="9" height="6" viewBox="0 0 9 6"><path d="M0.8 0.8 L4.5 4.5 L8.2 0.8" fill="none" stroke="#b8b8b8" stroke-width="1.4"/></svg>
<svg style="left:668px;top:610px" width="10" height="12" viewBox="0 0 10 12"><rect x="0" y="0" width="10.2" height="3.3" rx="0.5" fill="#f4cf5e"/><rect x="1.2" y="1.1" width="1.8" height="1.1" rx="0.55" fill="#1e1e1e"/><rect x="0" y="4" width="10.2" height="3.3" rx="0.5" fill="#f4cf5e"/><rect x="1.2" y="5.1" width="1.8" height="1.1" rx="0.55" fill="#1e1e1e"/><rect x="0" y="8" width="10.2" height="3.3" rx="0.5" fill="#f4cf5e"/><rect x="1.2" y="9.1" width="1.8" height="1.1" rx="0.55" fill="#1e1e1e"/></svg>
<div class="t" style="left:685px;top:608px;color:#d4d4d4;">assets</div>
<svg style="left:662px;top:631px" width="6" height="9" viewBox="0 0 6 9"><path d="M0.8 0.8 L4.5 4.5 L0.8 8.2" fill="none" stroke="#b8b8b8" stroke-width="1.4"/></svg>
<svg style="left:674px;top:630px" width="13" height="11" viewBox="0 0 13 11"><path d="M0 0.5 Q0 0 0.5 0 H4.3 L5.8 1.5 H11.5 Q12 1.5 12 2 V9.3 Q12 9.8 11.5 9.8 H0.5 Q0 9.8 0 9.3Z" fill="#3a9be0"/></svg>
<div class="t" style="left:692px;top:628px;color:#d4d4d4;">Animations</div>
<svg style="left:662px;top:651px" width="6" height="9" viewBox="0 0 6 9"><path d="M0.8 0.8 L4.5 4.5 L0.8 8.2" fill="none" stroke="#b8b8b8" stroke-width="1.4"/></svg>
<svg style="left:674px;top:650px" width="13" height="11" viewBox="0 0 13 11"><path d="M0 0.5 Q0 0 0.5 0 H4.3 L5.8 1.5 H11.5 Q12 1.5 12 2 V9.3 Q12 9.8 11.5 9.8 H0.5 Q0 9.8 0 9.3Z" fill="#3a9be0"/></svg>
<div class="t" style="left:692px;top:648px;color:#d4d4d4;">Levels</div>
<svg style="left:662px;top:671px" width="6" height="9" viewBox="0 0 6 9"><path d="M0.8 0.8 L4.5 4.5 L0.8 8.2" fill="none" stroke="#b8b8b8" stroke-width="1.4"/></svg>
<svg style="left:674px;top:670px" width="13" height="11" viewBox="0 0 13 11"><path d="M0 0.5 Q0 0 0.5 0 H4.3 L5.8 1.5 H11.5 Q12 1.5 12 2 V9.3 Q12 9.8 11.5 9.8 H0.5 Q0 9.8 0 9.3Z" fill="#3a9be0"/></svg>
<div class="t" style="left:692px;top:668px;color:#d4d4d4;">Prefabs</div>
<svg style="left:662px;top:691px" width="6" height="9" viewBox="0 0 6 9"><path d="M0.8 0.8 L4.5 4.5 L0.8 8.2" fill="none" stroke="#b8b8b8" stroke-width="1.4"/></svg>
<svg style="left:674px;top:690px" width="13" height="11" viewBox="0 0 13 11"><path d="M0 0.5 Q0 0 0.5 0 H4.3 L5.8 1.5 H11.5 Q12 1.5 12 2 V9.3 Q12 9.8 11.5 9.8 H0.5 Q0 9.8 0 9.3Z" fill="#3a9be0"/></svg>
<div class="t" style="left:692px;top:688px;color:#d4d4d4;">Scripts</div>
<svg style="left:662px;top:711px" width="6" height="9" viewBox="0 0 6 9"><path d="M0.8 0.8 L4.5 4.5 L0.8 8.2" fill="none" stroke="#b8b8b8" stroke-width="1.4"/></svg>
<svg style="left:674px;top:710px" width="13" height="11" viewBox="0 0 13 11"><path d="M0 0.5 Q0 0 0.5 0 H4.3 L5.8 1.5 H11.5 Q12 1.5 12 2 V9.3 Q12 9.8 11.5 9.8 H0.5 Q0 9.8 0 9.3Z" fill="#3a9be0"/></svg>
<div class="t" style="left:692px;top:708px;color:#d4d4d4;">Textures</div>
<svg style="left:662px;top:731px" width="6" height="9" viewBox="0 0 6 9"><path d="M0.8 0.8 L4.5 4.5 L0.8 8.2" fill="none" stroke="#b8b8b8" stroke-width="1.4"/></svg>
<svg style="left:674px;top:730px" width="13" height="11" viewBox="0 0 13 11"><path d="M0 0.5 Q0 0 0.5 0 H4.3 L5.8 1.5 H11.5 Q12 1.5 12 2 V9.3 Q12 9.8 11.5 9.8 H0.5 Q0 9.8 0 9.3Z" fill="#3a9be0"/></svg>
<div class="t" style="left:692px;top:728px;color:#d4d4d4;">Tilemaps</div>
<div class="t" style="left:672px;top:748px;color:#3a9be0;font-weight:bold;letter-spacing:0.5px">TS</div>
<div class="t" style="left:691px;top:748px;color:#d4d4d4;">LabelLocalizationTest</div>
<svg style="left:673px;top:767px" width="12" height="14" viewBox="0 0 12 14"><path fill-rule="evenodd" d="M5.2 0.3 C6 1.5 7 2.5 8.5 3.3 L9.6 2.6 C10.6 4.5 11.1 6.5 11.1 8.5 C11.1 11.5 8.6 13.2 6 13.2 C3 13.2 0.9 11 0.9 8.3 C0.9 5.5 3.5 3.5 5.2 0.3Z M5.7 2.8 C7.1 4.4 8.5 6.3 8.5 8.8 C8.5 10.6 7.3 11.7 5.8 11.7 C4.2 11.7 2.9 10.6 2.9 8.8 C2.9 6.3 4.4 4.5 5.7 2.8Z" fill="#eeb23e"/></svg>
<div class="t" style="left:691px;top:768px;color:#d4d4d4;">scene-2d</div>
<svg style="left:655px;top:791px" width="6" height="9" viewBox="0 0 6 9"><path d="M0.8 0.8 L4.5 4.5 L0.8 8.2" fill="none" stroke="#b8b8b8" stroke-width="1.4"/></svg>
<svg style="left:668px;top:790px" width="10" height="12" viewBox="0 0 10 12"><rect x="0" y="0" width="10.2" height="3.3" rx="0.5" fill="#f4cf5e"/><rect x="1.2" y="1.1" width="1.8" height="1.1" rx="0.55" fill="#1e1e1e"/><rect x="0" y="4" width="10.2" height="3.3" rx="0.5" fill="#f4cf5e"/><rect x="1.2" y="5.1" width="1.8" height="1.1" rx="0.55" fill="#1e1e1e"/><rect x="0" y="8" width="10.2" height="3.3" rx="0.5" fill="#f4cf5e"/><rect x="1.2" y="9.1" width="1.8" height="1.1" rx="0.55" fill="#1e1e1e"/></svg>
<div class="t" style="left:685px;top:788px;color:#d4d4d4;">internal</div>
<svg style="left:655px;top:811px" width="6" height="9" viewBox="0 0 6 9"><path d="M0.8 0.8 L4.5 4.5 L0.8 8.2" fill="none" stroke="#b8b8b8" stroke-width="1.4"/></svg>
<svg style="left:668px;top:810px" width="10" height="12" viewBox="0 0 10 12"><rect x="0" y="0" width="10.2" height="3.3" rx="0.5" fill="#f4cf5e"/><rect x="1.2" y="1.1" width="1.8" height="1.1" rx="0.55" fill="#1e1e1e"/><rect x="0" y="4" width="10.2" height="3.3" rx="0.5" fill="#f4cf5e"/><rect x="1.2" y="5.1" width="1.8" height="1.1" rx="0.55" fill="#1e1e1e"/><rect x="0" y="8" width="10.2" height="3.3" rx="0.5" fill="#f4cf5e"/><rect x="1.2" y="9.1" width="1.8" height="1.1" rx="0.55" fill="#1e1e1e"/></svg>
<div class="t" style="left:685px;top:808px;color:#d4d4d4;">yandex-games-sdk</div>
<!-- STATUS BAR -->
<div class="a" style="left:0;top:1054px;width:1920px;height:24px;background:#2c2c2c"></div>
<svg style="left:1677px;top:1059px" width="14" height="14" viewBox="0 0 14 14"><circle cx="7" cy="7" r="6.6" fill="#3ec4ee"/><path d="M7.6 5.8 L6.2 11" stroke="#1e2a30" stroke-width="1.8"/><circle cx="8" cy="3.6" r="1.1" fill="#1e2a30"/></svg>
<div class="t" style="left:1695px;top:1059px;color:#c0c0c0;">4</div>
<svg style="left:1712px;top:1059px" width="14" height="14" viewBox="0 0 14 14"><circle cx="7" cy="7" r="6.6" fill="#c8c8c8"/><rect x="6.1" y="2.8" width="1.8" height="5.6" fill="#2c2c2c"/><rect x="6.1" y="9.6" width="1.8" height="1.8" fill="#2c2c2c"/></svg>
<div class="t" style="left:1729px;top:1059px;color:#c0c0c0;">0</div>
<svg style="left:1747px;top:1059px" width="14" height="14" viewBox="0 0 14 14"><circle cx="7" cy="7" r="6.6" fill="#c8c8c8"/><path d="M4.3 4.3 L9.7 9.7 M9.7 4.3 L4.3 9.7" stroke="#2c2c2c" stroke-width="1.6"/></svg>
<div class="t" style="left:1764px;top:1059px;color:#c0c0c0;">0</div>
<svg style="left:1793px;top:1059px" width="11" height="13" viewBox="0 0 11 13"><path d="M5.5 0.5 C8.5 0.5 9 3.5 9 6 V9 L10.5 10.5 H0.5 L2 9 V6 C2 3.5 2.5 0.5 5.5 0.5Z" fill="#a0a0a0"/><rect x="4" y="11" width="3" height="2" rx="1" fill="#a0a0a0"/></svg>
<div class="t" style="left:1810px;top:1059px;color:#c0c0c0;">0</div>
<div class="t" style="left:1825px;top:1059px;color:#c8c8c8;">Version 3.7.1</div>
<svg style="left:826px;top:457px" width="13" height="17" viewBox="0 0 13 17"><path d="M0.8 0.8 L11.6 11.6 H6.3 L2.4 15.6 H0.8 Z" fill="#000" stroke="#dfe6e8" stroke-width="1.1" stroke-linejoin="round"/></svg>
</body></html>
